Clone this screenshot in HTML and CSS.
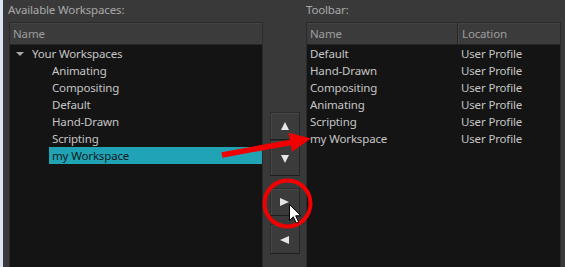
FILE: index.html
```html
<!DOCTYPE html>
<html>
<head>
<meta charset="utf-8">
<link rel="stylesheet" href="styles.css">
</head>
<body>
<div class="page">
  <div class="edge"></div>
  <div class="dialog">
    <div class="title">Available Workspaces:</div>
    <div class="spacer"></div>
    <div class="title">Toolbar:</div>

    <div class="panel">
      <div class="header"><div class="hcell">Name</div></div>
      <div class="rows">
        <div class="row root"><span class="twisty"></span>Your Workspaces</div>
        <div class="row child">Animating</div>
        <div class="row child">Compositing</div>
        <div class="row child">Default</div>
        <div class="row child">Hand-Drawn</div>
        <div class="row child">Scripting</div>
        <div class="row child selected"><span class="sel">my Workspace</span></div>
      </div>
    </div>

    <div class="buttons">
      <div class="btn up-btn"><span class="tri tri-up"></span></div>
      <div class="btn down-btn"><span class="tri tri-down"></span></div>
      <div class="btn right-btn"><span class="tri tri-right"></span></div>
      <div class="btn left-btn"><span class="tri tri-left"></span></div>
    </div>

    <div class="panel">
      <div class="header two">
        <div class="hcell name-col">Name</div>
        <div class="hcell loc-col">Location</div>
      </div>
      <div class="rows">
        <div class="trow"><span class="name-col">Default</span><span class="loc-col">User Profile</span></div>
        <div class="trow"><span class="name-col">Hand-Drawn</span><span class="loc-col">User Profile</span></div>
        <div class="trow"><span class="name-col">Compositing</span><span class="loc-col">User Profile</span></div>
        <div class="trow"><span class="name-col">Animating</span><span class="loc-col">User Profile</span></div>
        <div class="trow"><span class="name-col">Scripting</span><span class="loc-col">User Profile</span></div>
        <div class="trow"><span class="name-col">my Workspace</span><span class="loc-col">User Profile</span></div>
      </div>
    </div>
  </div>

  <svg class="annotations" width="565" height="267" viewBox="0 0 565 267">
    <line x1="222" y1="155" x2="292" y2="142.2" stroke="#f00000" stroke-width="5.5"/>
    <polygon points="311,138.5 288.6,132.8 292,151.8" fill="#f00000"/>
    <circle cx="287.5" cy="203.5" r="23" fill="none" stroke="#f00000" stroke-width="4"/>
    <path d="M289.5 204.5 L289.5 220.5 L293.3 216.8 L296.3 223 L298.6 222 L295.7 215.8 L301 215.8 Z" fill="#ffffff" stroke="#000000" stroke-width="1" stroke-linejoin="miter"/>
  </svg>
</div>
</body>
</html>
```

FILE: styles.css
```css
html, body {
  margin: 0;
  padding: 0;
}

body {
  background: #393939;
  font-family: "Noto Sans", "DejaVu Sans", sans-serif;
  font-size: 11.5px;
  letter-spacing: -0.15px;
  overflow: hidden;
}

.page {
  position: relative;
  display: flex;
  width: 565px;
  height: 267px;
  overflow: hidden;
}

.edge {
  width: 3px;
  flex: none;
  background: #d9e5f2;
}

.dialog {
  flex: 1;
  display: grid;
  grid-template-columns: 254px 43px 255px;
  grid-template-rows: 22px 1fr;
  padding-left: 6px;
}

.title {
  color: #a9a9a9;
  line-height: 20px;
  padding-left: 0;
}

.title:first-child {
  margin-left: -1px;
}

.panel {
  background: #141414;
  border: 1px solid #2a2a2a;
  border-bottom: none;
  display: flex;
  flex-direction: column;
  min-height: 0;
}

.header {
  height: 21px;
  background: #3b3b3b;
  border-bottom: 1px solid #262626;
  box-shadow: inset 0 1px 0 #444;
  display: flex;
  align-items: center;
  color: #9e9e9e;
}

.hcell {
  padding-left: 3px;
  line-height: 21px;
}

.header.two .name-col {
  width: 147px;
  border-right: 1px solid #262626;
  box-shadow: 1px 0 0 #474747;
}

.header.two .loc-col {
  padding-left: 4px;
}

.rows {
  color: #c6c6c6;
}

.row, .trow {
  height: 17px;
  line-height: 17px;
  white-space: nowrap;
}

.row.root {
  padding-left: 6px;
  display: flex;
  align-items: center;
}

.twisty {
  width: 0;
  height: 0;
  border-left: 4px solid transparent;
  border-right: 4px solid transparent;
  border-top: 4px solid #a8a8a8;
  margin-right: 8px;
  margin-top: 1px;
}

.row.child {
  padding-left: 42px;
}

.row.selected {
  padding-left: 39px;
}

.sel {
  display: block;
  background: #20a4b5;
  color: #101a1c;
  padding-left: 3px;
}

.trow {
  display: flex;
}

.trow .name-col {
  width: 147px;
  padding-left: 3px;
}

.trow .loc-col {
  padding-left: 4px;
}

.buttons {
  display: flex;
  flex-direction: column;
  align-items: center;
  padding-top: 90px;
}

.btn {
  background: #3b3b3b;
  border: 1px solid #2c2c2c;
  border-bottom-color: #1e1e1e;
  border-right-color: #262626;
  box-shadow: inset 1px 1px 0 #474747;
  display: flex;
  align-items: center;
  justify-content: center;
  box-sizing: border-box;
  width: 30px;
}

.up-btn {
  height: 28px;
}

.down-btn {
  height: 36px;
  padding-top: 2px;
}

.right-btn {
  height: 28px;
  margin-top: 12px;
}

.left-btn {
  height: 30px;
  margin-top: 8px;
  padding-top: 2px;
}

.tri {
  width: 0;
  height: 0;
}

.tri-up {
  border-left: 4px solid transparent;
  border-right: 4px solid transparent;
  border-bottom: 8px solid #e6e6e6;
}

.tri-down {
  border-left: 4px solid transparent;
  border-right: 4px solid transparent;
  border-top: 8px solid #e6e6e6;
}

.tri-right {
  border-top: 4px solid transparent;
  border-bottom: 4px solid transparent;
  border-left: 9px solid #e6e6e6;
}

.tri-left {
  border-top: 4px solid transparent;
  border-bottom: 4px solid transparent;
  border-right: 9px solid #e6e6e6;
}

.annotations {
  position: absolute;
  left: 0;
  top: 0;
  pointer-events: none;
}
```
